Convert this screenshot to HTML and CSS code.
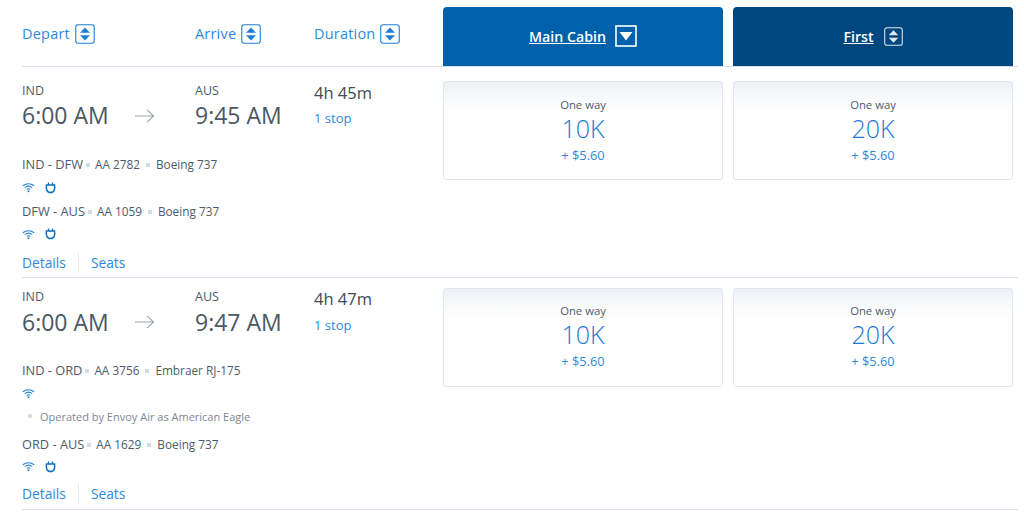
FILE: index.html
```html
<!DOCTYPE html>
<html lang="en">
<head>
<meta charset="utf-8">
<title>Flights</title>
<link rel="stylesheet" href="styles.css">
</head>
<body>
<svg class="defs" width="0" height="0" aria-hidden="true">
  <symbol id="wifi" viewBox="0 0 14 11">
    <path d="M1 3.6C4.4.8 9.6.8 13 3.6M3 5.6c2.300-1.800 5.700-1.800 8 0M5 7.500c1.200-.9 2.800-.9 4 0" fill="none" stroke="currentColor" stroke-width="1.100"/>
    <circle cx="7" cy="9.600" r="1.100" fill="currentColor"/>
  </symbol>
  <symbol id="plug" viewBox="0 0 11 12">
    <path d="M3.500.5v2.500M7.500.5v2.500" stroke="currentColor" stroke-width="1.300" fill="none"/>
    <path d="M1.500 3h8c.4 2.300.3 4-.3 5.200-.5 1.400-1.600 2.300-3.700 2.300s-3.200-.9-3.700-2.300C1.200 7 1.100 5.300 1.500 3z" fill="none" stroke="currentColor" stroke-width="1.500"/>
  </symbol>
  <symbol id="sort" viewBox="0 0 20 20">
    <rect x=".75" y=".75" width="18.500" height="18.500" rx="2.500" fill="none" stroke="currentColor" stroke-width="1.100"/>
    <path d="M10 3.500l5 5.300H5zM10 16.500l-5-5.300h10z" class="sort-fill"/>
  </symbol>
</svg>

<div class="page">
  <div class="grid header">
    <div class="col-depart head-cell"><span>Depart</span><svg class="sort"><use href="#sort"/></svg></div>
    <div class="col-arrive head-cell"><span>Arrive</span><svg class="sort"><use href="#sort"/></svg></div>
    <div class="col-duration head-cell"><span>Duration</span><svg class="sort"><use href="#sort"/></svg></div>
    <div class="cabin cabin-main">
      <a class="cabin-link">Main Cabin</a>
      <svg class="sort-active" viewBox="0 0 22 22"><rect x="1" y="1" width="20" height="20" fill="none" stroke="#fff" stroke-width="1.600"/><path d="M4.500 7h13L11 15.500z" fill="#fff"/></svg>
    </div>
    <div class="cabin cabin-first">
      <a class="cabin-link">First</a>
      <svg class="sort light"><use href="#sort"/></svg>
    </div>
  </div>

  <div class="grid flight flight-a">
    <div class="times">
      <div class="col-depart"><div class="code">IND</div><div class="time">6:00 AM</div></div>
      <div class="arrow-cell"><svg class="arrow" viewBox="0 0 20 14"><path d="M0 7h18.500M12 .8L18.600 7 12 13.200" fill="none" stroke="currentColor" stroke-width="1.100"/></svg></div>
      <div class="col-arrive"><div class="code">AUS</div><div class="time">9:45 AM</div></div>
      <div class="col-duration"><div class="dur">4h 45m</div><div class="stops">1 stop</div></div>
    </div>
    <div class="fare fare-main"><div class="way">One way</div><div class="miles">10K</div><div class="tax">+ $5.60</div></div>
    <div class="fare fare-first"><div class="way">One way</div><div class="miles">20K</div><div class="tax">+ $5.60</div></div>
    <div class="detail">
      <div class="seg"><span class="route">IND - DFW</span><i class="dot"></i><span>AA 2782</span><i class="dot"></i><span>Boeing 737</span></div>
      <div class="amen"><svg class="wifi"><use href="#wifi"/></svg><svg class="plug"><use href="#plug"/></svg></div>
      <div class="seg seg-next"><span class="route">DFW - AUS</span><i class="dot"></i><span>AA 1059</span><i class="dot"></i><span>Boeing 737</span></div>
      <div class="amen amen-last"><svg class="wifi"><use href="#wifi"/></svg><svg class="plug"><use href="#plug"/></svg></div>
      <div class="links"><a>Details</a><a>Seats</a></div>
    </div>
  </div>

  <div class="grid flight flight-b">
    <div class="times">
      <div class="col-depart"><div class="code">IND</div><div class="time">6:00 AM</div></div>
      <div class="arrow-cell"><svg class="arrow" viewBox="0 0 20 14"><path d="M0 7h18.500M12 .8L18.600 7 12 13.200" fill="none" stroke="currentColor" stroke-width="1.100"/></svg></div>
      <div class="col-arrive"><div class="code">AUS</div><div class="time">9:47 AM</div></div>
      <div class="col-duration"><div class="dur">4h 47m</div><div class="stops">1 stop</div></div>
    </div>
    <div class="fare fare-main"><div class="way">One way</div><div class="miles">10K</div><div class="tax">+ $5.60</div></div>
    <div class="fare fare-first"><div class="way">One way</div><div class="miles">20K</div><div class="tax">+ $5.60</div></div>
    <div class="detail">
      <div class="seg"><span class="route">IND - ORD</span><i class="dot"></i><span>AA 3756</span><i class="dot"></i><span>Embraer RJ-175</span></div>
      <div class="amen"><svg class="wifi"><use href="#wifi"/></svg></div>
      <div class="operated"><i class="dot"></i><span>Operated by Envoy Air as American Eagle</span></div>
      <div class="seg seg-next"><span class="route">ORD - AUS</span><i class="dot"></i><span>AA 1629</span><i class="dot"></i><span>Boeing 737</span></div>
      <div class="amen amen-last"><svg class="wifi"><use href="#wifi"/></svg><svg class="plug"><use href="#plug"/></svg></div>
      <div class="links"><a>Details</a><a>Seats</a></div>
    </div>
  </div>
</div>
</body>
</html>
```
FILE: styles.css
```css
* { box-sizing: border-box; }
html, body { margin: 0; padding: 0; background: #fff; }
body { font-family: "Open Sans", "Noto Sans", sans-serif; color: #36495a; overflow: hidden; }
.defs { position: absolute; }
.page { width: 996px; margin-left: 22px; padding-top: 7px; }

.grid { display: grid; grid-template-columns: 173px 119px 129px 280px 290px; border-bottom: 1px solid #d6e0ea; }
.header { height: 60px; align-items: stretch; }
.head-cell { display: flex; align-items: center; gap: 5px; font-size: 14.500px; letter-spacing: .2px; color: #2b8ae0; padding-bottom: 6px; }
.sort { width: 20px; height: 20px; color: #1f7fd6; fill: #0e6ebf; }
.sort-fill { fill: currentColor; }
.sort.light { color: #dbe6f0; width: 19px; height: 21px; }

.cabin { display: flex; align-items: center; justify-content: center; width: 280px; color: #fff; border-radius: 4px 4px 0 0; padding-bottom: 1px; }
.cabin-main { grid-column: 4; background: #0061ab; gap: 9px; }
.cabin-first { grid-column: 5; background: #00467f; gap: 10px; margin-left: 10px; }
.cabin-link { text-decoration: underline; font-weight: 600; font-size: 14.200px; }
.sort-active { width: 22px; height: 22px; }

.flight { grid-template-rows: auto 1fr; }
.flight-a { height: 211px; }
.flight-b { height: 232px; }

.times { grid-column: 1 / 4; grid-row: 1; display: grid; grid-template-columns: 110px 63px 119px 129px; padding-top: 15px; height: 70px; }
.flight-b .times { padding-top: 10px; height: 66px; }
.code { font-size: 12.500px; line-height: 17px; color: #4c5b6a; }
.time { font-size: 23px; line-height: 31px; margin-top: 1px; white-space: nowrap; color: #4a5764; }
.flight-b .time { margin-top: 2px; }
.arrow-cell { padding: 27px 0 0 3px; }
.arrow { display: block; width: 20px; height: 14px; color: #9ba5ae; }
.dur { font-size: 16.500px; line-height: 24px; margin-top: -1px; color: #3c4a59; }
.stops { font-size: 13px; line-height: 18px; margin-top: 4px; color: #2b8ae0; }
.flight-b .stops { margin-top: 5px; }

.fare { grid-row: 1 / 3; height: 99px; width: 280px; margin-top: 14px; border: 1px solid #dfe6ed; border-radius: 3px; background: linear-gradient(#eef1f5, #fff 28%); text-align: center; padding-top: 15px; }
.flight-b .fare { margin-top: 10px; padding-top: 14px; }
.fare-main { grid-column: 4; }
.fare-first { grid-column: 5; margin-left: 10px; }
.way { font-size: 11.300px; line-height: 16px; color: #4c5b6a; }
.miles { font-size: 25px; font-weight: 300; line-height: 30px; color: #1a7ad8; }
.tax { font-size: 12.800px; line-height: 20px; color: #2b8ae0; margin-top: 2px; }

.detail { grid-column: 1 / 4; grid-row: 2; padding-top: 19px; }
.flight-b .detail { padding-top: 18px; }
.seg, .operated { display: flex; align-items: center; font-size: 11.800px; line-height: 17px; color: #4c5b6a; white-space: nowrap; }
.route { font-size: 12.800px; }
.seg-next { margin-top: 1px; }
.dot { display: block; width: 4px; height: 4px; background: #d4dbe2; margin: 0 6px; }
.route + .dot { margin: 0 5px 0 3px; }
.amen { display: flex; align-items: center; gap: 10px; height: 29px; color: #1f7fd6; }
.amen-last { height: 28px; }
.flight-b .amen-last { height: 27px; }
.wifi { width: 13px; height: 11px; }
.plug { width: 11px; height: 12px; color: #0e6ebf; }
.operated { color: #7d8894; font-size: 11px; height: 16px; margin: 0 0 12px 6px; }
.operated .dot { margin: 0 8px 0 0; }
.links { display: flex; font-size: 13.800px; line-height: 20px; color: #2b8ae0; margin-top: 5px; }
.flight-b .links { margin-top: 4px; }
.links a:first-child { padding-right: 12px; border-right: 1px solid #e2e7ec; margin-right: 12px; }
```
